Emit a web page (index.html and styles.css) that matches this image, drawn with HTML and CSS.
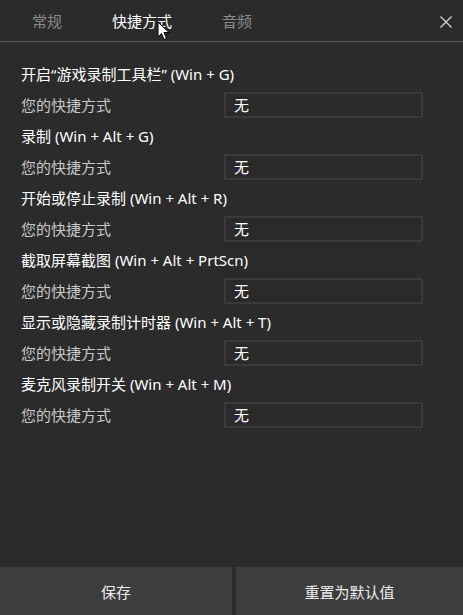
FILE: index.html
```html
<!DOCTYPE html>
<html lang="zh-CN">
<head>
<meta charset="utf-8">
<title>快捷方式</title>
<link rel="stylesheet" href="styles.css">
</head>
<body>
<div class="window">
  <header class="tabbar">
    <nav class="tabs">
      <span class="tab">常规</span>
      <span class="tab active">快捷方式</span>
      <span class="tab">音频</span>
    </nav>
    <svg class="close" width="12" height="12" viewBox="0 0 12 12"><path d="M0.5 0.5 L11.5 11.5 M11.5 0.5 L0.5 11.5" stroke="#d0d0d0" stroke-width="1.4" fill="none"/></svg>
    <svg class="cursor" width="13" height="20" viewBox="0 0 13 20"><path d="M1 1 L1 16 L4.5 12.5 L7 18.5 L9.5 17.5 L7 11.5 L12 11.5 Z" fill="#ffffff" stroke="#000" stroke-width="1"/></svg>
  </header>
  <main class="content">
    <section class="group">
      <div class="heading">开启“游戏录制工具栏” (Win + G)</div>
      <div class="row"><span class="label">您的快捷方式</span><div class="field">无</div></div>
    </section>
    <section class="group">
      <div class="heading">录制 (Win + Alt + G)</div>
      <div class="row"><span class="label">您的快捷方式</span><div class="field">无</div></div>
    </section>
    <section class="group">
      <div class="heading">开始或停止录制 (Win + Alt + R)</div>
      <div class="row"><span class="label">您的快捷方式</span><div class="field">无</div></div>
    </section>
    <section class="group">
      <div class="heading">截取屏幕截图 (Win + Alt + PrtScn)</div>
      <div class="row"><span class="label">您的快捷方式</span><div class="field">无</div></div>
    </section>
    <section class="group">
      <div class="heading">显示或隐藏录制计时器 (Win + Alt + T)</div>
      <div class="row"><span class="label">您的快捷方式</span><div class="field">无</div></div>
    </section>
    <section class="group">
      <div class="heading">麦克风录制开关 (Win + Alt + M)</div>
      <div class="row"><span class="label">您的快捷方式</span><div class="field">无</div></div>
    </section>
  </main>
  <footer class="actions">
    <button class="btn save">保存</button>
    <button class="btn reset">重置为默认值</button>
  </footer>
</div>
</body>
</html>
```

FILE: styles.css
```css
html, body {
  margin: 0;
  padding: 0;
  background: #2b2b2b;
}

body {
  font-family: "Noto Sans", "Noto Sans CJK SC", sans-serif;
  font-size: 15px;
  color: #ffffff;
}

.window {
  height: 615px;
  display: flex;
  flex-direction: column;
  overflow: hidden;
}

.tabbar {
  position: relative;
  height: 41px;
  border-bottom: 1px solid #5c5c5c;
  display: flex;
  align-items: center;
  justify-content: space-between;
  padding: 0 11px 0 32px;
}

.tabs {
  display: flex;
  gap: 50px;
}

.tab {
  color: #8a8a8a;
  line-height: 20px;
}

.tab.active {
  color: #ffffff;
}

.close {
  display: block;
  margin-top: 3px;
}

.cursor {
  position: absolute;
  left: 157px;
  top: 21px;
}

.content {
  padding: 17px 0 0 21px;
}

.group {
  display: flex;
  flex-direction: column;
}

.heading {
  height: 30px;
  line-height: 30px;
  color: #ffffff;
}

.row {
  height: 32px;
  display: grid;
  grid-template-columns: 203px 199px;
  align-items: center;
}

.label {
  color: #c9c9c9;
  line-height: 20px;
}

.field {
  height: 26px;
  box-sizing: border-box;
  border: 2px solid #3a3a3a;
  background: #2a2a2a;
  padding-left: 8px;
  line-height: 22px;
  color: #ffffff;
}

.actions {
  margin-top: auto;
  height: 48px;
  display: flex;
  gap: 4px;
}

.btn {
  border: none;
  background: #3d3d3d;
  color: #eeeeee;
  font-family: "Noto Sans", "Noto Sans CJK SC", sans-serif;
  font-size: 15px;
  padding: 0;
}

.btn.save {
  width: 232px;
}

.btn.reset {
  flex: 1;
}
```
